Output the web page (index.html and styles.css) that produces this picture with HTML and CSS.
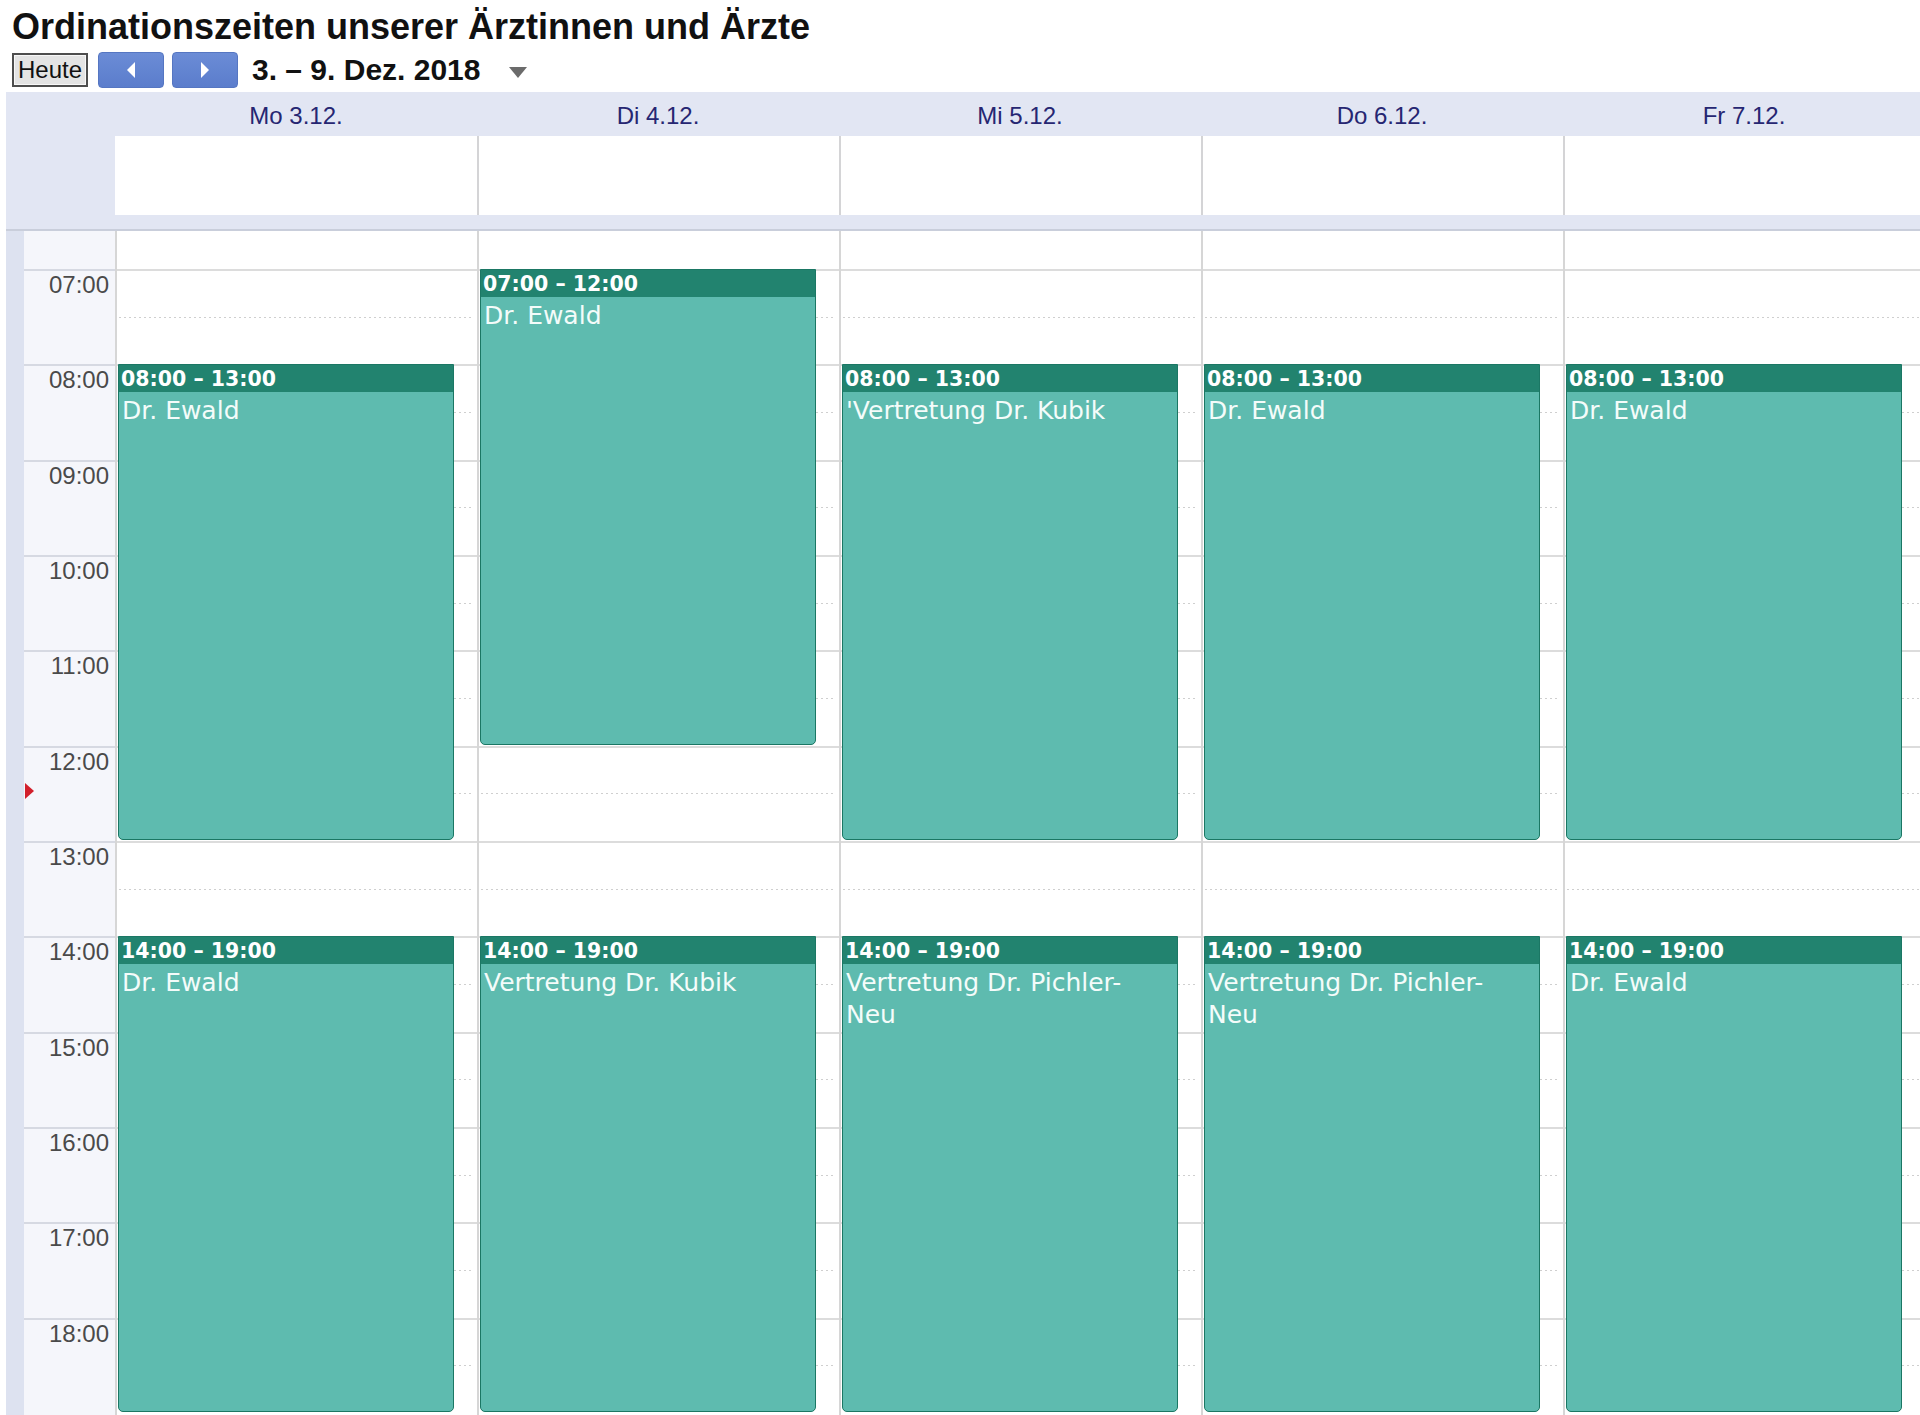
FILE: index.html
```html
<!DOCTYPE html>
<html lang="de">
<head>
<meta charset="utf-8">
<title>Ordinationszeiten</title>
<link rel="stylesheet" href="styles.css">
</head>
<body>
<div class="page">
  <h1 class="title">Ordinationszeiten unserer Ärztinnen und Ärzte</h1>
  <div class="toolbar">
    <button class="today">Heute</button>
    <button class="nav"><svg width="10" height="16" viewBox="0 0 10 16"><polygon points="9,0 9,16 1,8" fill="#fff"/></svg></button>
    <button class="nav"><svg width="10" height="16" viewBox="0 0 10 16"><polygon points="1,0 1,16 9,8" fill="#fff"/></svg></button>
    <span class="range">3. – 9. Dez. 2018</span>
    <span class="drop"><svg width="18" height="11" viewBox="0 0 18 11"><polygon points="0,0 18,0 9,11" fill="#6b6b6b"/></svg></span>
  </div>

  <div class="cal">
    <div class="row head">
      <div class="gut"></div>
      <div class="dayname">Mo 3.12.</div>
      <div class="dayname">Di 4.12.</div>
      <div class="dayname">Mi 5.12.</div>
      <div class="dayname">Do 6.12.</div>
      <div class="dayname">Fr 7.12.</div>
    </div>
    <div class="row allday">
      <div class="gut"></div>
      <div class="adcell first"></div>
      <div class="adcell"></div>
      <div class="adcell"></div>
      <div class="adcell"></div>
      <div class="adcell"></div>
    </div>
    <div class="sep"></div>

    <div class="row body">
      <div class="gutter">
        <div class="slot-top"></div>
        <div class="tslot">07:00</div>
        <div class="tslot">08:00</div>
        <div class="tslot">09:00</div>
        <div class="tslot">10:00</div>
        <div class="tslot">11:00</div>
        <div class="tslot">12:00</div>
        <div class="tslot">13:00</div>
        <div class="tslot">14:00</div>
        <div class="tslot">15:00</div>
        <div class="tslot">16:00</div>
        <div class="tslot">17:00</div>
        <div class="tslot">18:00</div>
        <span class="now"></span>
      </div>

      <div class="day">
        <div class="slot-top"></div>
        <div class="hslot"></div><div class="hslot"></div><div class="hslot"></div><div class="hslot"></div>
        <div class="hslot"></div><div class="hslot"></div><div class="hslot"></div><div class="hslot"></div>
        <div class="hslot"></div><div class="hslot"></div><div class="hslot"></div><div class="hslot"></div>
        <div class="event" style="top:133.33px;height:475.67px"><div class="etime">08:00 – 13:00</div><div class="ename">Dr. Ewald</div></div>
        <div class="event" style="top:705.33px;height:475.67px"><div class="etime">14:00 – 19:00</div><div class="ename">Dr. Ewald</div></div>
      </div>

      <div class="day">
        <div class="slot-top"></div>
        <div class="hslot"></div><div class="hslot"></div><div class="hslot"></div><div class="hslot"></div>
        <div class="hslot"></div><div class="hslot"></div><div class="hslot"></div><div class="hslot"></div>
        <div class="hslot"></div><div class="hslot"></div><div class="hslot"></div><div class="hslot"></div>
        <div class="event" style="top:38px;height:475.67px"><div class="etime">07:00 – 12:00</div><div class="ename">Dr. Ewald</div></div>
        <div class="event" style="top:705.33px;height:475.67px"><div class="etime">14:00 – 19:00</div><div class="ename">Vertretung Dr. Kubik</div></div>
      </div>

      <div class="day">
        <div class="slot-top"></div>
        <div class="hslot"></div><div class="hslot"></div><div class="hslot"></div><div class="hslot"></div>
        <div class="hslot"></div><div class="hslot"></div><div class="hslot"></div><div class="hslot"></div>
        <div class="hslot"></div><div class="hslot"></div><div class="hslot"></div><div class="hslot"></div>
        <div class="event" style="top:133.33px;height:475.67px"><div class="etime">08:00 – 13:00</div><div class="ename">'Vertretung Dr. Kubik</div></div>
        <div class="event" style="top:705.33px;height:475.67px"><div class="etime">14:00 – 19:00</div><div class="ename">Vertretung Dr. Pichler-Neu</div></div>
      </div>

      <div class="day">
        <div class="slot-top"></div>
        <div class="hslot"></div><div class="hslot"></div><div class="hslot"></div><div class="hslot"></div>
        <div class="hslot"></div><div class="hslot"></div><div class="hslot"></div><div class="hslot"></div>
        <div class="hslot"></div><div class="hslot"></div><div class="hslot"></div><div class="hslot"></div>
        <div class="event" style="top:133.33px;height:475.67px"><div class="etime">08:00 – 13:00</div><div class="ename">Dr. Ewald</div></div>
        <div class="event" style="top:705.33px;height:475.67px"><div class="etime">14:00 – 19:00</div><div class="ename">Vertretung Dr. Pichler-Neu</div></div>
      </div>

      <div class="day">
        <div class="slot-top"></div>
        <div class="hslot"></div><div class="hslot"></div><div class="hslot"></div><div class="hslot"></div>
        <div class="hslot"></div><div class="hslot"></div><div class="hslot"></div><div class="hslot"></div>
        <div class="hslot"></div><div class="hslot"></div><div class="hslot"></div><div class="hslot"></div>
        <div class="event" style="top:133.33px;height:475.67px"><div class="etime">08:00 – 13:00</div><div class="ename">Dr. Ewald</div></div>
        <div class="event" style="top:705.33px;height:475.67px"><div class="etime">14:00 – 19:00</div><div class="ename">Dr. Ewald</div></div>
      </div>
    </div>
  </div>
</div>
</body>
</html>
```

FILE: styles.css
```css
html, body {
  margin: 0;
  padding: 0;
  background: #ffffff;
}
body {
  font-family: "Liberation Sans", Arial, sans-serif;
  color: #111;
  overflow: hidden;
  height: 1415px;
}
.page {
  width: 1920px;
}
.title {
  margin: 0;
  padding: 7px 0 0 12px;
  height: 40px;
  font: bold 36px/40px "Liberation Sans", Arial, sans-serif;
  color: #111;
  white-space: nowrap;
}
.toolbar {
  display: flex;
  align-items: center;
  height: 36px;
  margin-top: 5px;
  padding-left: 12px;
}
.today {
  box-sizing: border-box;
  width: 76px;
  height: 34px;
  padding: 0;
  margin: 0;
  border: 2px solid #4e4e4e;
  box-shadow: inset 0 0 0 1px #f8f8f8;
  background: #e4e4e4;
  font: 24px/28px "Liberation Sans", Arial, sans-serif;
  color: #111;
}
.nav {
  box-sizing: border-box;
  width: 66px;
  height: 36px;
  margin: 0 0 0 8px;
  padding: 0;
  border: 1px solid #5576c2;
  border-radius: 4px;
  background: linear-gradient(#6b8cd6, #5b7dcc);
  display: flex;
  align-items: center;
  justify-content: center;
}
.today + .nav {
  margin-left: 10px;
}
.range {
  margin-left: 14px;
  font: bold 30px/36px "Liberation Sans", Arial, sans-serif;
  color: #111;
}
.drop {
  margin-left: 28px;
  display: flex;
  align-items: center;
  padding-top: 4px;
}

.cal {
  margin: 4px 0 0 6px;
  width: 1914px;
  background: #e2e6f3;
  overflow: hidden;
}
.row {
  display: grid;
  grid-template-columns: 109px repeat(5, 362px);
}
.head {
  height: 44px;
}
.dayname {
  text-align: center;
  font: 24px/44px "Liberation Sans", Arial, sans-serif;
  color: #262672;
  padding-top: 2px;
}
.allday {
  height: 79px;
}
.adcell {
  background: #fff;
  border-left: 2px solid #d4d4d6;
}
.adcell.first {
  border-left: 0;
}
.sep {
  height: 14px;
  border-bottom: 2px solid #c9cedb;
}

.body {
  height: 1200px;
  background: #fff;
}
.gutter {
  position: relative;
  padding-left: 18px;
  background: linear-gradient(to right, #dde2f0 18px, #f5f6fb 18px);
}
.slot-top {
  height: 38px;
}
.tslot {
  box-sizing: border-box;
  height: 95.333px;
  border-top: 2px solid #d6d9e2;
  text-align: right;
  padding: 2px 6px 0 0;
  font: 24px/24px "Liberation Sans", Arial, sans-serif;
  color: #4a4a4a;
}
.now {
  position: absolute;
  left: 19px;
  top: 552px;
  width: 0;
  height: 0;
  border-top: 8px solid transparent;
  border-bottom: 8px solid transparent;
  border-left: 9px solid #d21f2b;
}
.day {
  position: relative;
  box-sizing: border-box;
  border-left: 2px solid #d6d6d6;
}
.hslot {
  position: relative;
  box-sizing: border-box;
  height: 95.333px;
  border-top: 2px solid #dcdcdc;
}
.hslot::after {
  content: "";
  position: absolute;
  left: 2px;
  right: 4px;
  top: 45.67px;
  height: 1px;
  background-image: linear-gradient(to right, #cfcfcf 50%, transparent 50%);
  background-size: 5px 1px;
}
.event {
  position: absolute;
  left: 1px;
  width: 336px;
  box-sizing: border-box;
  background: #5ebbaf;
  border: 1px solid #1b7764;
  border-radius: 0 0 5px 5px;
  overflow: hidden;
  color: #fff;
}
.etime {
  height: 27px;
  background: #22836f;
  padding-left: 2px;
  font: bold 20.5px/29px "DejaVu Sans", Verdana, sans-serif;
  white-space: nowrap;
}
.ename {
  padding: 3px 6px 0 3px;
  font: 25px/32px "DejaVu Sans", Verdana, sans-serif;
  color: #f4fcfa;
}
```
